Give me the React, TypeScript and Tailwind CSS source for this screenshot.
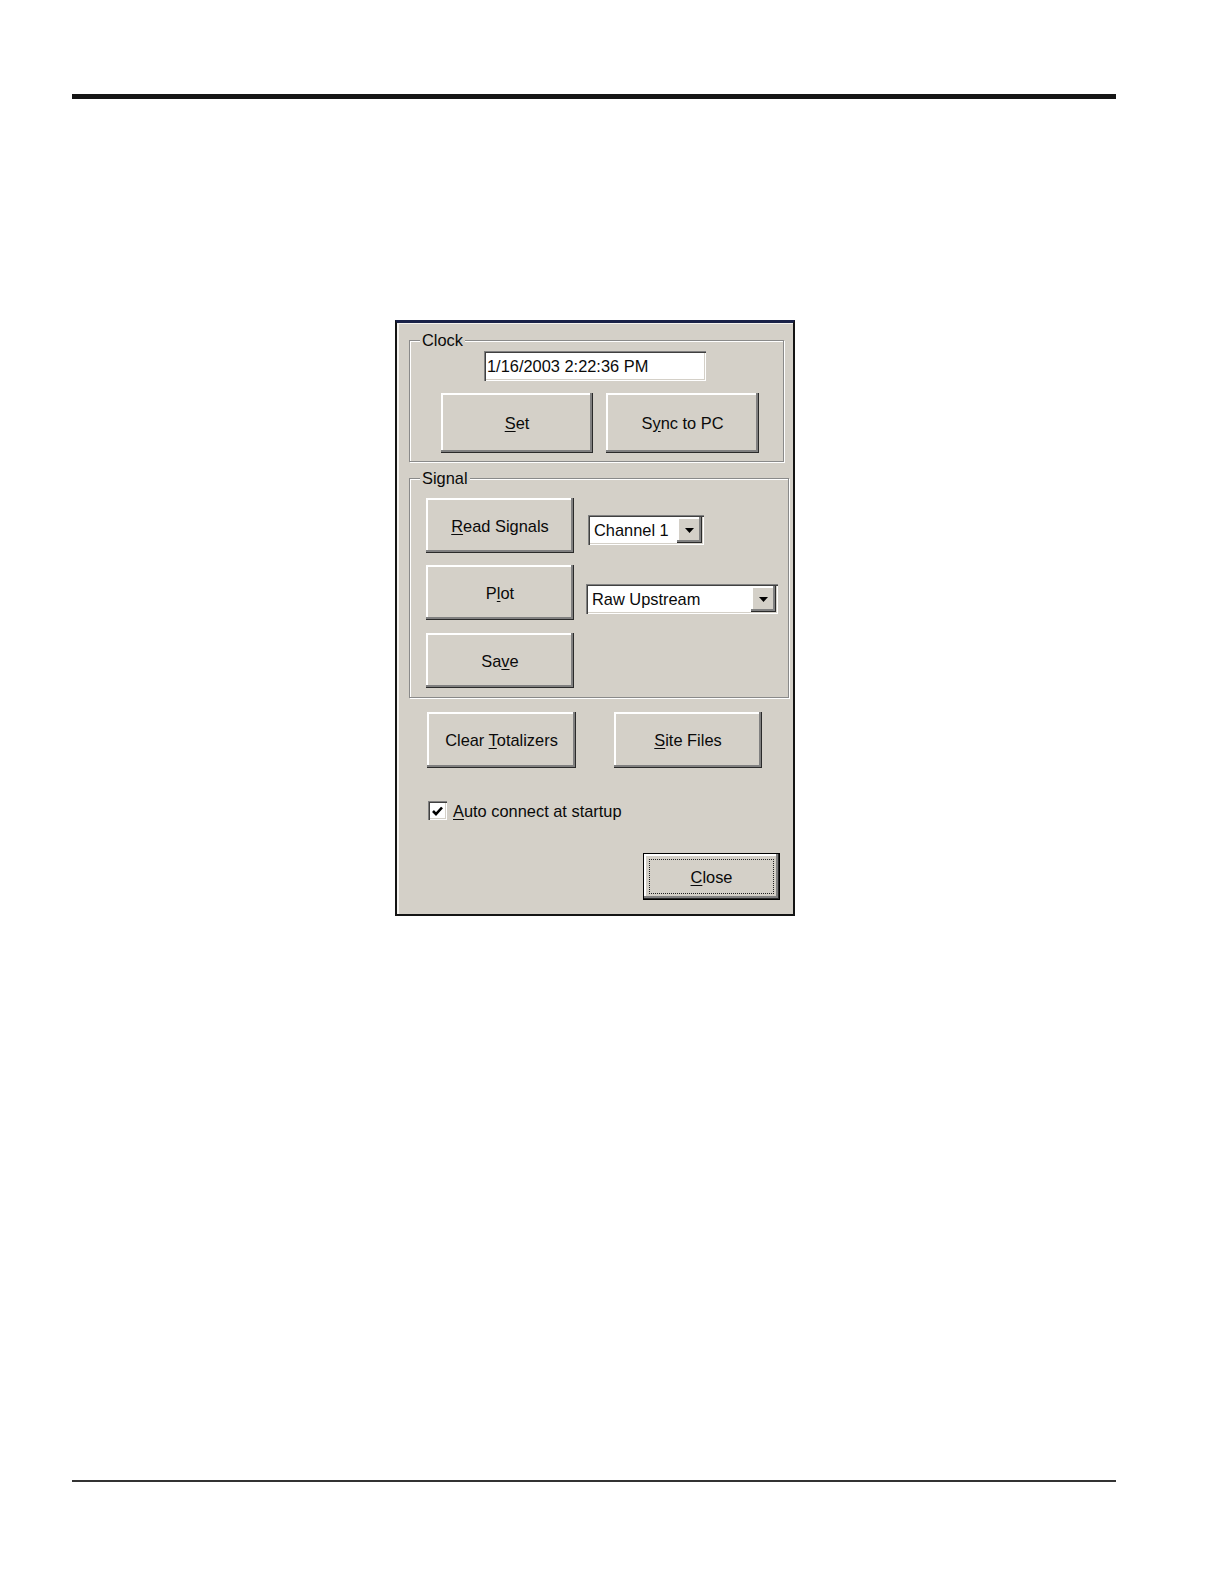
import React from "react";

const raised =
  "bg-[#d4d0c8] shadow-[inset_-1px_-1px_#2a2a2a,inset_-3px_-3px_#808080,inset_2px_2px_#ffffff]";
const sunken =
  "shadow-[inset_1px_1px_#808080,inset_2px_2px_#404040,inset_-1px_-1px_#ffffff,inset_-2px_-2px_#d4d0c8]";
const txt = "text-[16.4px] leading-[18px] text-[#0a0a0a]";

function Btn({
  w,
  h,
  children,
  className = "",
}: {
  w: string;
  h: string;
  children: React.ReactNode;
  className?: string;
}) {
  return (
    <div className={`${raised} ${w} ${h} ${className} flex items-center justify-center ${txt}`}>
      {children}
    </div>
  );
}

function Arrow() {
  return (
    <svg width="9" height="5" viewBox="0 0 9 5">
      <polygon points="0,0 9,0 4.5,5" fill="#000" />
    </svg>
  );
}

function Combo({ w, text, className = "" }: { w: string; text: string; className?: string }) {
  return (
    <div className={`${w} h-[30px] bg-white ${sunken} flex items-stretch p-[2px] ${className}`}>
      <div className={`flex-1 flex items-center pl-[4px] ${txt}`}>{text}</div>
      <div className={`${raised} w-[25px] flex items-center justify-center`}>
        <Arrow />
      </div>
    </div>
  );
}

function Group({
  label,
  className = "",
  children,
}: {
  label: string;
  className?: string;
  children: React.ReactNode;
}) {
  return (
    <div className={`border border-[#8a8a8a] shadow-[inset_1px_1px_#ffffff,1px_1px_#ffffff] ${className}`}>
      <div className={`-mt-[10px] ml-[10px] w-fit px-[2px] bg-[#d4d0c8] ${txt}`}>{label}</div>
      {children}
    </div>
  );
}

export default function App() {
  return (
    <div
      className="w-[1224px] min-h-[1584px] bg-white"
      style={{ fontFamily: '"Liberation Sans", Arial, sans-serif' }}
    >
      <div className="pt-[94px] pl-[72px]">
        <div className="w-[1044px] h-[5px] bg-[#151515]" />

        <div className="mt-[221px] ml-[323px] w-[400px] h-[596px] bg-[#d4d0c8] border-2 border-[#141414] border-t-[3px] border-t-[#1a2248] shadow-[inset_2px_1px_#f4f2ee]">
          {/* Clock */}
          <Group label="Clock" className="mt-[17px] ml-[12px] w-[375px] pb-[8px]">
            <div
              className={`mt-[2px] ml-[74px] w-[222px] h-[30px] bg-white ${sunken} flex items-center pl-[3px] ${txt}`}
            >
              1/16/2003 2:22:36 PM
            </div>
            <div className="mt-[12px] ml-[31px] flex gap-[13px]">
              <Btn w="w-[152px]" h="h-[60px]">
                <span>
                  <u className="underline-offset-2">S</u>et
                </span>
              </Btn>
              <Btn w="w-[153px]" h="h-[60px]">
                <span>
                  S<u className="underline-offset-2">y</u>nc to PC
                </span>
              </Btn>
            </div>
          </Group>

          {/* Signal */}
          <Group label="Signal" className="mt-[16px] ml-[12px] w-[380px] pb-[9px]">
            <div className="mt-[11px] ml-[16px] flex items-start">
              <Btn w="w-[148px]" h="h-[55px]">
                <span>
                  <u className="underline-offset-2">R</u>ead Signals
                </span>
              </Btn>
              <Combo w="w-[116px]" text="Channel 1" className="mt-[17px] ml-[14px]" />
            </div>
            <div className="mt-[12px] ml-[16px] flex items-start">
              <Btn w="w-[148px]" h="h-[55px]">
                <span>
                  P<u className="underline-offset-2">l</u>ot
                </span>
              </Btn>
              <Combo w="w-[192px]" text="Raw Upstream" className="mt-[19px] ml-[12px]" />
            </div>
            <div className="mt-[13px] ml-[16px] flex">
              <Btn w="w-[148px]" h="h-[55px]">
                <span>
                  Sa<u className="underline-offset-2">v</u>e
                </span>
              </Btn>
            </div>
          </Group>

          {/* Bottom buttons */}
          <div className="mt-[14px] ml-[30px] flex">
            <Btn w="w-[149px]" h="h-[56px]">
              <span>
                Clear <u className="underline-offset-2">T</u>otalizers
              </span>
            </Btn>
            <Btn w="w-[148px]" h="h-[56px]" className="ml-[38px]">
              <span>
                <u className="underline-offset-2">S</u>ite Files
              </span>
            </Btn>
          </div>

          {/* Checkbox */}
          <div className="mt-[33px] ml-[31px] flex items-center">
            <div className={`w-[19px] h-[19px] bg-white ${sunken} flex items-center justify-center`}>
              <svg width="13" height="12" viewBox="0 0 13 12">
                <path d="M2 6 L5 9.2 L11 2.5" stroke="#000" strokeWidth="2.6" fill="none" />
              </svg>
            </div>
            <span className={`ml-[6px] ${txt}`}>
              <u className="underline-offset-2">A</u>uto connect at startup
            </span>
          </div>

          {/* Close */}
          <div className="mt-[33px] flex justify-end pr-[13px]">
            <div className="w-[137px] h-[47px] border border-[#000] bg-[#d4d0c8] shadow-[inset_-1px_-1px_#2a2a2a,inset_-3px_-3px_#808080,inset_2px_2px_#ffffff] p-[5px]">
              <div className={`w-full h-full border border-dotted border-[#222] flex items-center justify-center ${txt}`}>
                <span>
                  <u className="underline-offset-2">C</u>lose
                </span>
              </div>
            </div>
          </div>
        </div>

        <div className="mt-[564px] w-[1044px] h-[2px] bg-[#333]" />
      </div>
    </div>
  );
}
